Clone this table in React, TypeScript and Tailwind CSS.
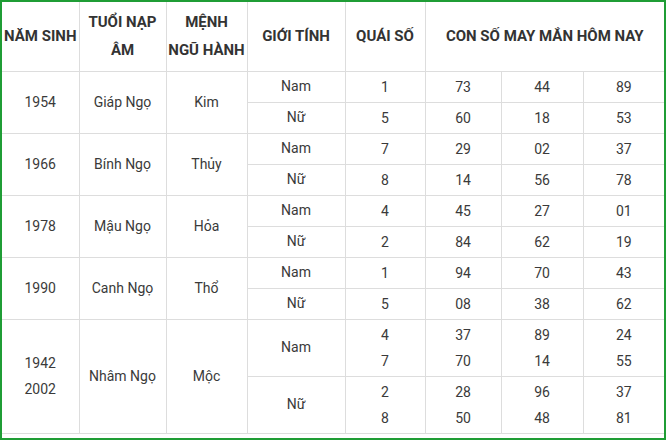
import React from "react";

type Row = {
  year: string[];
  tuoi: string;
  menh: string;
  nam: { q: string[]; n: string[][] };
  nu: { q: string[]; n: string[][] };
  tall?: boolean;
};

const rows: Row[] = [
  {
    year: ["1954"],
    tuoi: "Giáp Ngọ",
    menh: "Kim",
    nam: { q: ["1"], n: [["73"], ["44"], ["89"]] },
    nu: { q: ["5"], n: [["60"], ["18"], ["53"]] },
  },
  {
    year: ["1966"],
    tuoi: "Bính Ngọ",
    menh: "Thủy",
    nam: { q: ["7"], n: [["29"], ["02"], ["37"]] },
    nu: { q: ["8"], n: [["14"], ["56"], ["78"]] },
  },
  {
    year: ["1978"],
    tuoi: "Mậu Ngọ",
    menh: "Hỏa",
    nam: { q: ["4"], n: [["45"], ["27"], ["01"]] },
    nu: { q: ["2"], n: [["84"], ["62"], ["19"]] },
  },
  {
    year: ["1990"],
    tuoi: "Canh Ngọ",
    menh: "Thổ",
    nam: { q: ["1"], n: [["94"], ["70"], ["43"]] },
    nu: { q: ["5"], n: [["08"], ["38"], ["62"]] },
  },
  {
    year: ["1942", "2002"],
    tuoi: "Nhâm Ngọ",
    menh: "Mộc",
    nam: { q: ["4", "7"], n: [["37", "70"], ["89", "14"], ["24", "55"]] },
    nu: { q: ["2", "8"], n: [["28", "50"], ["96", "48"], ["37", "81"]] },
    tall: true,
  },
];

const cell = "border border-[#dddddd] text-center align-middle p-0";

function Lines({ items }: { items: string[] }) {
  return (
    <>
      {items.map((t, i) => (
        <div key={i} className="leading-[26px]">
          {t}
        </div>
      ))}
    </>
  );
}

export default function App() {
  return (
    <div
      className="w-[666px] h-[440px] bg-white border-[2px] border-[#1f9d35] overflow-hidden"
      style={{ fontFamily: "Roboto, 'Noto Sans', sans-serif" }}
    >
      <table className="w-full table-fixed border-collapse text-[14px] text-[#3a3a3a]">
        <colgroup>
          <col className="w-[77px]" />
          <col className="w-[87px]" />
          <col className="w-[81px]" />
          <col className="w-[98px]" />
          <col className="w-[80px]" />
          <col className="w-[76px]" />
          <col className="w-[82px]" />
          <col className="w-[81px]" />
        </colgroup>
        <thead>
          <tr className="h-[69px] text-[15px] font-bold text-[#333333] leading-[28px]">
            <th className={`${cell} border-t-0 border-l-0 whitespace-nowrap`}>NĂM SINH</th>
            <th className={`${cell} border-t-0`}>
              TUỔI NẠP
              <br />
              ÂM
            </th>
            <th className={`${cell} border-t-0`}>
              MỆNH
              <br />
              NGŨ HÀNH
            </th>
            <th className={`${cell} border-t-0`}>GIỚI TÍNH</th>
            <th className={`${cell} border-t-0`}>QUÁI SỐ</th>
            <th className={`${cell} border-t-0 border-r-0`} colSpan={3}>
              CON SỐ MAY MẮN HÔM NAY
            </th>
          </tr>
        </thead>
        <tbody>
          {rows.map((r) => {
            const h = r.tall ? "h-[57px]" : "h-[31px]";
            return (
              <React.Fragment key={r.tuoi}>
                <tr className={h}>
                  <td className={`${cell} border-l-0`} rowSpan={2}>
                    <Lines items={r.year} />
                  </td>
                  <td className={cell} rowSpan={2}>
                    {r.tuoi}
                  </td>
                  <td className={cell} rowSpan={2}>
                    {r.menh}
                  </td>
                  <td className={cell}>Nam</td>
                  <td className={cell}>
                    <Lines items={r.nam.q} />
                  </td>
                  {r.nam.n.map((c, i) => (
                    <td key={i} className={`${cell} ${i === 2 ? "border-r-0" : ""}`}>
                      <Lines items={c} />
                    </td>
                  ))}
                </tr>
                <tr className={h}>
                  <td className={cell}>Nữ</td>
                  <td className={cell}>
                    <Lines items={r.nu.q} />
                  </td>
                  {r.nu.n.map((c, i) => (
                    <td key={i} className={`${cell} ${i === 2 ? "border-r-0" : ""}`}>
                      <Lines items={c} />
                    </td>
                  ))}
                </tr>
              </React.Fragment>
            );
          })}
        </tbody>
      </table>
    </div>
  );
}
